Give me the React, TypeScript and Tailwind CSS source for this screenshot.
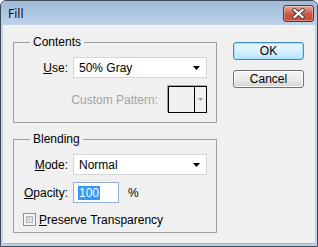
export default function App() {
  return (
    <div className="w-[318px] h-[247px] flex flex-col border border-[#3f4a57] rounded-t-[6px] bg-[#bcd3eb] overflow-hidden font-['Liberation_Sans',Arial,sans-serif] text-[12px] text-black">
      {/* Title bar */}
      <div className="h-[24px] flex items-start justify-between pl-[7px] pr-[3px] bg-gradient-to-b from-[#9fb9d8] to-[#bdd3ea]">
        <span className="mt-[5px] leading-[16px] text-[12px] font-['Noto_Sans',sans-serif] text-[#101018]">Fill</span>
        <button className="mt-[4px] w-[31px] h-[17px] rounded-[3px] border border-[#6a2a24] bg-gradient-to-b from-[#e9a99a] via-[#cf5a48] to-[#c24a35] flex items-center justify-center shadow-[inset_0_0_0_1px_rgba(255,255,255,0.35)]">
          <svg width="13" height="11" viewBox="0 0 13 11">
            <path d="M2.5 2 L10.5 9 M10.5 2 L2.5 9" stroke="#4a3a3a" strokeWidth="4" strokeLinecap="square" fill="none" />
            <path d="M2.5 2 L10.5 9 M10.5 2 L2.5 9" stroke="#ffffff" strokeWidth="2.2" strokeLinecap="square" fill="none" />
          </svg>
        </button>
      </div>

      {/* Client area */}
      <div className="flex-1 mx-[2px] mb-[2px] bg-[#f0f0f0] flex pl-[10px] pt-[10px] border-b border-[#79c7ec]">
        {/* Left column */}
        <div className="w-[204px] flex flex-col">
          <fieldset className="border border-[#a0a0a0] px-0 pt-[8px] pb-[9px] m-0 flex flex-col">
            <legend className="ml-[16px] px-[3px] leading-[14px]">Contents</legend>
            <div className="flex items-center h-[21px]">
              <span className="w-[54px] text-right">
                <span className="underline">U</span>se:
              </span>
              <div className="ml-[5px] w-[134px] h-[21px] bg-white border border-[#d2d6db] flex items-center justify-between pl-[5px] pr-[6px]">
                <span>50% Gray</span>
                <svg width="7" height="4" viewBox="0 0 7 4">
                  <path d="M0 0 H7 L3.5 4 Z" fill="#000" />
                </svg>
              </div>
            </div>
            <div className="flex items-center justify-end pr-[9px] mt-[8px] h-[27px]">
              <span className="text-[#a3a3a3]">Custom Pattern:</span>
              <div className="ml-[10px] w-[39px] h-[27px] border border-black shadow-[-1px_-1px_0_#a0a0a0] flex">
                <div className="w-[26px] border-r border-black" />
                <div className="flex-1 flex items-center justify-center">
                  <svg width="5" height="3" viewBox="0 0 5 3">
                    <path d="M0 0 H5 L2.5 3 Z" fill="#a0a0a0" />
                  </svg>
                </div>
              </div>
            </div>
          </fieldset>

          <fieldset className="mt-[9px] border border-[#a0a0a0] px-0 pt-[8px] pb-[6px] m-0 flex flex-col">
            <legend className="ml-[16px] px-[3px] leading-[14px]">Blending</legend>
            <div className="flex items-center h-[21px]">
              <span className="w-[54px] text-right">
                <span className="underline">M</span>ode:
              </span>
              <div className="ml-[5px] w-[134px] h-[21px] bg-white border border-[#d2d6db] flex items-center justify-between pl-[5px] pr-[6px]">
                <span>Normal</span>
                <svg width="7" height="4" viewBox="0 0 7 4">
                  <path d="M0 0 H7 L3.5 4 Z" fill="#000" />
                </svg>
              </div>
            </div>
            <div className="flex items-center h-[21px] mt-[7px]">
              <span className="w-[54px] text-right">
                <span className="underline">O</span>pacity:
              </span>
              <div className="ml-[5px] w-[46px] h-[21px] bg-white border border-[#8fb2d8] flex items-center pl-[4px]">
                <span className="bg-[#3399ff] text-white leading-[14px] px-[1px]">100</span>
              </div>
              <span className="ml-[9px]">%</span>
            </div>
            <div className="flex items-center h-[13px] mt-[10px] pl-[9px]">
              <div className="w-[13px] h-[13px] border border-[#8e8f8f] bg-[#f4f4f4] p-[2px]">
                <div className="w-full h-full bg-gradient-to-br from-[#c9cbcf] to-[#f0f0f0] border border-[#b4b7bb]" />
              </div>
              <span className="ml-[3px]">
                <span className="underline">P</span>reserve Transparency
              </span>
            </div>
          </fieldset>
        </div>

        {/* Right column */}
        <div className="ml-[16px] mt-[7px] flex flex-col">
          <button className="w-[71px] h-[18px] rounded-[3px] border border-[#3c8fc8] bg-gradient-to-b from-[#ecf7fd] via-[#d9f0fc] to-[#b7e2fb] shadow-[inset_0_0_0_1px_#a6e0fb] leading-[14px] text-black">
            OK
          </button>
          <button className="mt-[10px] w-[71px] h-[18px] rounded-[3px] border border-[#707070] bg-gradient-to-b from-[#f4f4f4] via-[#ebebeb] to-[#d4d4d4] shadow-[inset_0_0_0_1px_#fcfcfc] leading-[14px] text-black">
            Cancel
          </button>
        </div>
      </div>
    </div>
  );
}
